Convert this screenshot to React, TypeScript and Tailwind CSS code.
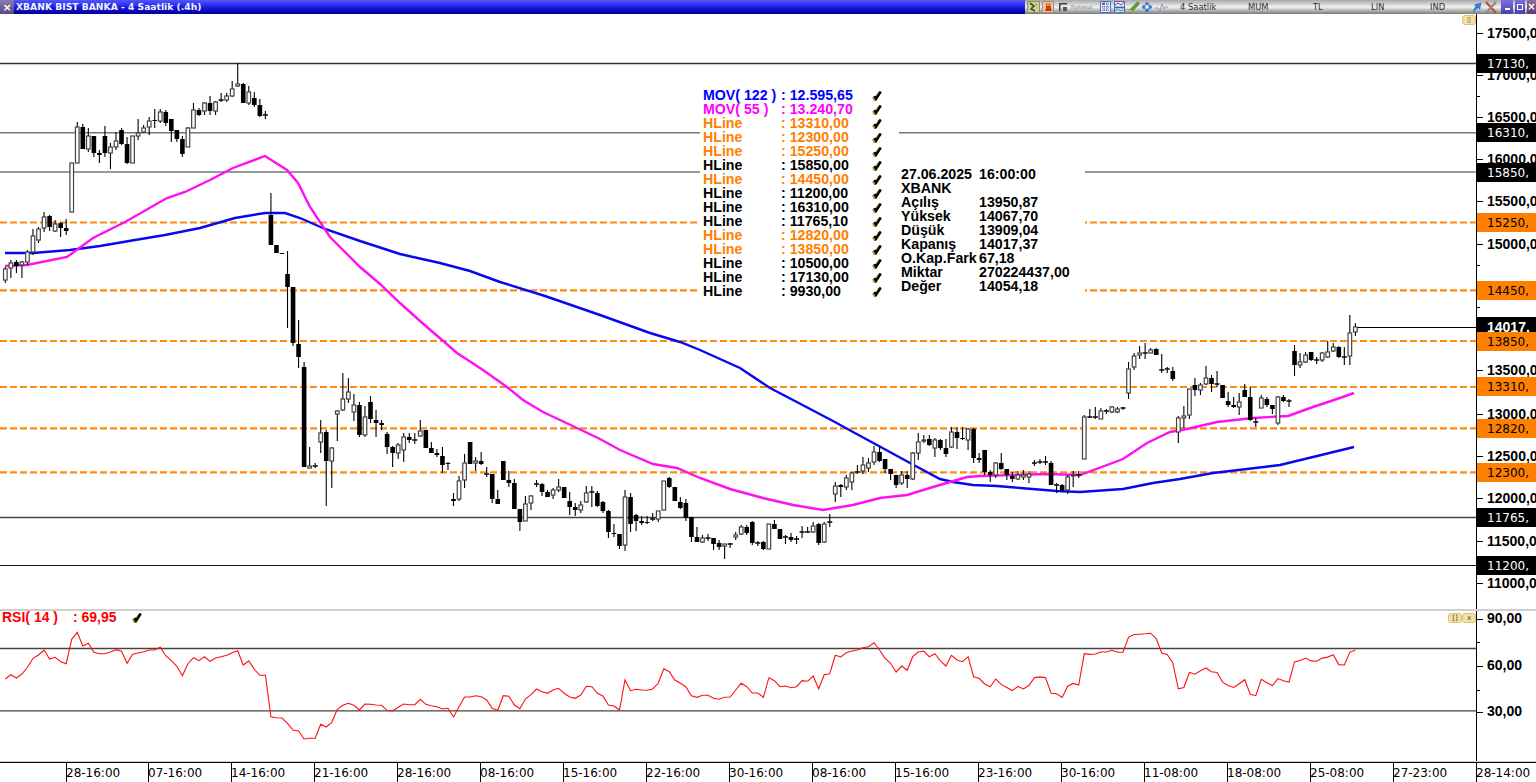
const candles: number[][] = [
  // wickTop, bodyTop, bodyBottom, wickBottom, black
  [267,269,280,283,0],[260,263,268,278,0],[260,262,266,273,1],[261,262,265,278,0],[250,252,262,265,0],[229,236,252,255,0],
  [227,229,240,243,0],[212,217,228,232,0],[215,216,227,231,1],[220,224,231,232,0],[222,223,228,237,1],[219,228,231,235,1],
  [163,163,212,212,0],[122,127,163,163,0],[124,127,149,149,1],[128,136,149,152,0],[136,136,153,157,1],[150,153,155,163,1],
  [126,136,153,157,1],[143,147,153,169,0],[132,141,147,150,0],[128,130,144,145,1],[137,144,163,164,1],[136,136,163,163,0],
  [119,133,136,140,0],[125,128,132,133,0],[117,121,127,135,0],[109,120,121,128,1],[109,112,121,123,0],[110,112,123,126,1],
  [119,119,131,142,1],[130,130,139,142,1],[136,139,154,157,1],[127,128,147,147,0],[103,110,128,128,0],[108,110,115,116,1],
  [102,103,111,115,0],[96,103,111,115,1],[101,102,111,115,0],[93,100,100,102,1],[93,96,100,102,0],[81,89,96,97,0],
  [63,84,86,87,0],[83,84,103,103,1],[86,92,103,105,0],[92,98,105,107,1],[99,105,116,117,1],[111,115,115,119,1],
  [193,215,245,245,1],[245,245,253,253,1],[253,253,254,254,1],[251,274,287,328,1],[287,287,343,346,1],[320,344,357,368,1],
  [362,367,467,467,1],[447,466,468,468,0],[463,466,466,468,1],[420,433,442,453,0],[430,432,461,506,1],[447,448,461,488,0],
  [410,411,414,441,0],[373,399,410,411,0],[378,392,399,403,0],[394,405,412,421,0],[402,405,435,437,1],[406,417,435,437,0],
  [396,402,419,423,1],[410,420,423,437,1],[420,423,425,430,1],[432,434,447,454,1],[446,447,453,467,1],[443,445,453,459,0],
  [433,437,450,462,0],[433,437,440,443,1],[433,440,440,444,1],[420,431,436,437,0],[430,430,448,448,1],[442,448,453,453,1],
  [449,453,455,457,1],[447,456,465,473,1],[462,463,464,470,1],[493,499,501,506,1],[476,481,499,501,0],[454,463,480,488,0],
  [442,442,464,464,1],[457,461,463,471,0],[452,461,464,465,1],[467,474,474,477,1],[474,474,499,503,1],[490,499,504,504,1],
  [461,461,480,480,1],[471,480,483,487,1],[479,483,509,509,1],[509,509,522,531,1],[496,504,521,521,0],[495,496,503,510,0],
  [480,484,484,487,1],[483,484,492,496,1],[490,492,497,497,1],[488,490,495,499,0],[479,487,490,492,0],[487,487,498,498,1],
  [492,501,507,515,1],[503,507,510,516,1],[501,505,510,513,0],[486,493,502,503,0],[486,492,492,507,1],[491,493,506,507,1],
  [501,502,511,513,1],[510,511,532,538,1],[524,533,534,537,1],[534,534,546,549,1],[490,497,545,551,0],[493,497,524,532,1],
  [514,515,521,531,1],[516,521,523,525,1],[516,522,523,524,1],[513,519,519,521,1],[511,511,519,522,0],[481,481,510,510,0],
  [477,478,487,488,1],[487,487,501,501,1],[497,502,508,509,1],[499,503,518,521,1],[517,517,537,542,1],[527,537,542,542,1],
  [535,538,542,543,0],[534,538,538,541,1],[538,538,544,550,1],[540,543,547,550,1],[544,544,546,559,0],[543,544,544,548,1],
  [532,535,537,540,0],[525,527,534,535,0],[525,527,533,535,1],[521,522,543,545,1],[541,543,543,546,1],[541,542,549,550,1],
  [524,524,549,549,0],[520,524,529,529,1],[529,529,539,539,1],[535,537,537,544,1],[533,537,540,542,1],[536,539,539,544,1],
  [526,532,532,538,1],[527,532,532,533,1],[522,526,532,533,0],[523,524,543,545,1],[522,524,542,543,0],[514,522,522,527,1],
  [482,486,494,502,0],[484,485,487,497,1],[475,478,487,490,0],[472,473,482,490,0],[465,472,472,474,1],[457,465,471,474,0],
  [458,463,468,472,0],[446,452,462,465,0],[447,452,461,462,1],[459,459,469,473,1],[469,469,474,480,1],[475,475,485,488,1],
  [471,475,483,485,0],[471,475,479,488,1],[452,453,479,480,0],[433,442,453,460,0],[435,440,441,443,0],[435,439,445,446,1],
  [438,440,448,457,0],[439,440,448,450,1],[439,448,454,457,1],[427,432,447,448,0],[427,432,438,449,1],[427,438,439,440,1],
  [428,429,440,450,0],[428,429,458,463,1],[453,458,460,463,1],[450,450,472,475,1],[470,472,475,482,1],[462,463,475,478,0],
  [453,463,469,470,1],[469,469,475,480,1],[472,476,479,482,1],[471,475,479,480,0],[470,475,477,480,0],[471,474,477,483,0],
  [460,463,463,466,1],[459,462,462,464,1],[456,462,462,465,1],[461,463,485,485,1],[483,485,485,493,1],[484,485,490,492,1],
  [475,477,490,494,0],[471,475,476,487,0],[471,475,475,478,1],[415,417,459,459,0],[409,417,417,418,1],[407,417,417,419,1],
  [408,411,419,419,0],[409,411,411,414,1],[406,407,412,413,0],[407,409,412,413,0],[407,408,408,410,1],[362,369,393,399,0],
  [353,356,367,370,0],[346,353,355,359,0],[343,353,353,359,1],[348,350,353,353,0],[348,349,355,355,1],[354,370,370,373,1],
  [367,369,369,373,1],[367,371,379,381,1],[416,418,432,443,0],[406,416,418,428,0],[389,389,415,419,0],[378,385,390,396,1],
  [383,385,390,395,0],[366,378,384,385,0],[375,378,384,392,1],[371,384,384,387,1],[385,385,398,398,1],[392,401,405,407,1],
  [397,405,407,408,1],[393,402,407,415,0],[384,390,397,397,1],[387,397,420,421,1],[418,422,422,427,1],[395,398,408,408,0],
  [397,399,405,407,1],[405,405,409,414,1],[396,397,423,425,0],[395,397,401,402,1],[399,401,401,407,1],[345,351,365,376,1],
  [353,362,365,368,0],[352,355,362,363,0],[352,352,360,361,1],[357,360,360,364,1],[352,353,360,362,0],[341,352,357,358,0],
  [343,347,351,352,0],[346,347,357,358,1],[347,357,357,365,1],[315,333,356,365,0],[323,327,332,336,0],
];

const blue = "5,253 33,253 70,250 100,246 135,240 165,235 200,228 235,218 265,213 285,213 300,218 325,229 360,241 400,254 440,263 470,271 500,282 545,296 600,315 650,333 680,342 700,350 740,368 770,388 793,400 833,421 853,432 877,445 910,463 940,479 953,482 973,485 997,486 1020,488 1057,491 1080,492 1123,489 1153,483 1180,479 1213,473 1247,469 1280,465 1313,457 1354,447";
const magenta = "5,266 27,265 67,257 93,238 125,222 167,198 185,192 210,180 233,168 265,156 287,170 298,183 310,207 330,237 360,267 380,284 400,303 420,321 442,340 457,353 483,370 507,387 523,400 543,412 577,428 600,439 620,450 653,464 677,468 700,478 730,489 763,498 793,505 823,510 853,505 880,498 907,495 933,487 967,477 980,476 1047,474 1080,475 1123,459 1147,443 1170,432 1187,429 1217,422 1253,418 1288,416 1313,407 1337,399 1354,393";

// rsi values read off at 3x for the first part, then at the slightly smaller crop scale
const rsiA = [237,224,234,222,202,175,165,150,177,172,185,191,118,97,138,130,157,161,161,156,149,154,190,163,159,155,150,150,142,167,182,199,227,191,173,182,170,184,174,170,166,158,152,195,182,208,226,226,350,353,354,370,390,393,417,415,415,373,381,367,328,316,310,316,330,312,313,315,316,331,333,322,312,314,314,298,313,317,320,327,325,351,320,291,291,287,290,300,325,331,287,289,315,326,297,284,267,275,280,270,265,280,291,295,285,259,260,280,288,315,318,330,240,272,268,270,271,267,250,206,215,240,250,261,287,292,286,286,295,298,292,291,270,250,260,279,279,292,233,242,260,258,263,260,242,244,228,266,224,221,166,171,158,153,150,143,140,128,150,175,190,216,198,211,170,156,153,170,161,183,198,166,180,185,170,230,235,252,260,237];
const rsiB = [247,256,265,253,260,250,227,225,227,273,274,285,252,244,249,157,159,158,152,152,147,153,153,109,101,100,99,97,113,155,160,183,260,256,212,217,207,199,210,212,240,250,256,245,233,276,280,232,242,250,230,236,240,181,177,170,178,179,170,167,160,189,190,153,146];
const rsi = [...rsiA.map((v) => 600 + v / 3), ...rsiB.map((v) => 600 + v / 2.925)]
  .map((y, i) => `${(5.33 + 5.533 * i).toFixed(1)},${y.toFixed(1)}`)
  .join(" ");

const legend = [
  { name: "MOV( 122 )", value: ": 12.595,65", color: "text-[#0000ff]" },
  { name: "MOV( 55 )", value: ": 13.240,70", color: "text-[#ff00ff]" },
  { name: "HLine", value: ": 13310,00", color: "text-[#ff8000]" },
  { name: "HLine", value: ": 12300,00", color: "text-[#ff8000]" },
  { name: "HLine", value: ": 15250,00", color: "text-[#ff8000]" },
  { name: "HLine", value: ": 15850,00", color: "text-black" },
  { name: "HLine", value: ": 14450,00", color: "text-[#ff8000]" },
  { name: "HLine", value: ": 11200,00", color: "text-black" },
  { name: "HLine", value: ": 16310,00", color: "text-black" },
  { name: "HLine", value: ": 11765,10", color: "text-black" },
  { name: "HLine", value: ": 12820,00", color: "text-[#ff8000]" },
  { name: "HLine", value: ": 13850,00", color: "text-[#ff8000]" },
  { name: "HLine", value: ": 10500,00", color: "text-black" },
  { name: "HLine", value: ": 17130,00", color: "text-black" },
  { name: "HLine", value: ": 9930,00", color: "text-black" },
];

const quote = [
  ["27.06.2025", "16:00:00"],
  ["XBANK", ""],
  ["Açılış", "13950,87"],
  ["Yüksek", "14067,70"],
  ["Düşük", "13909,04"],
  ["Kapanış", "14017,37"],
  ["O.Kap.Fark", "67,18"],
  ["Miktar", "270224437,00"],
  ["Değer", "14054,18"],
];

const priceTicks = [
  { y: 33, label: "17500,0" }, { y: 75, label: "17000,0" }, { y: 117, label: "16500,0" }, { y: 159, label: "16000,0" },
  { y: 201, label: "15500,0" }, { y: 244, label: "15000,0" }, { y: 286, label: "14500,0" }, { y: 328, label: "14000,0" },
  { y: 370, label: "13500,0" }, { y: 414, label: "13000,0" }, { y: 456, label: "12500,0" }, { y: 498, label: "12000,0" },
  { y: 541, label: "11500,0" }, { y: 583, label: "11000,0" },
];
const priceTags = [
  { y: 63, label: "17130,", orange: false }, { y: 132, label: "16310,", orange: false }, { y: 172, label: "15850,", orange: false },
  { y: 222, label: "15250,", orange: true }, { y: 290, label: "14450,", orange: true }, { y: 341, label: "13850,", orange: true },
  { y: 386, label: "13310,", orange: true }, { y: 428, label: "12820,", orange: true }, { y: 472, label: "12300,", orange: true },
  { y: 517, label: "11765,", orange: false }, { y: 565, label: "11200,", orange: false },
];
const times = ["28-16:00","07-16:00","14-16:00","21-16:00","28-16:00","08-16:00","15-16:00","22-16:00","30-16:00","08-16:00","15-16:00","23-16:00","30-16:00","11-08:00","18-08:00","25-08:00","27-23:00"];

function Check({ className = "" }: { className?: string }) {
  return (
    <svg width="10" height="11" viewBox="0 0 10 11" className={className}>
      <path d="M2 6.5 L3.8 9.5 L8.5 2" fill="none" stroke="#b89a30" strokeWidth="3" transform="translate(-0.8 0.4)" />
      <path d="M2.5 6 L4 8.8 L8.8 1.5" fill="none" stroke="#000" strokeWidth="2.4" />
    </svg>
  );
}

function PaneButton({ children }: { children: React.ReactNode }) {
  return (
    <div className="flex h-[10px] w-[14px] items-center justify-center rounded-[3px] border border-[#dcc27a] bg-[#f5e0a0] font-['DejaVu_Sans',sans-serif] text-[7px] leading-none text-[#444]">
      {children}
    </div>
  );
}

function ToolIcons() {
  return (
    <div className="flex items-center">
      <svg width="13" height="12" viewBox="0 0 13 12" className="ml-[2px]">
        <rect x="0.5" y="0.5" width="12" height="11" fill="#c8d0a0" stroke="#889070" />
        <path d="M3 2 L7 5 L4 8 L8 10" fill="none" stroke="#3a5a20" strokeWidth="1.6" />
        <circle cx="9" cy="3.5" r="1.5" fill="#d8b020" />
      </svg>
      <svg width="12" height="12" viewBox="0 0 12 12" className="ml-[2px]">
        <rect x="0.5" y="0.5" width="11" height="11" fill="#e8c8a0" stroke="#a09080" />
        <path d="M4 2 L8 2 L9 7 L10 10 L3 10 L4 7 Z" fill="#d83020" />
        <circle cx="6" cy="3.5" r="1.5" fill="#e8c020" />
      </svg>
      <svg width="9" height="9" viewBox="0 0 9 9" className="ml-[5px]">
        <path d="M0.8 8 V0.8 H8.2" fill="none" stroke="#444" strokeWidth="1.6" />
        <rect x="4" y="4" width="4" height="4" fill="#555" />
      </svg>
      <span className="ml-[3px] w-[24px] overflow-hidden whitespace-nowrap font-['DejaVu_Sans',sans-serif] text-[5px] leading-none text-[#777]">Fortrend</span>
      <svg width="11" height="12" viewBox="0 0 11 12" className="ml-[5px]">
        <rect x="0.5" y="0.5" width="10" height="11" fill="#e8f0ff" stroke="#5070c0" />
        <path d="M2 3 H9 M2 6 H9 M2 9 H9 M4 1 V11 M7 1 V11" stroke="#3050b0" strokeDasharray="1 1" />
        <rect x="2" y="2" width="3" height="2" fill="#d04020" />
      </svg>
      <svg width="11" height="12" viewBox="0 0 11 12" className="ml-[3px]">
        <rect x="0.5" y="0.5" width="10" height="11" fill="#dfe8ff" stroke="#5070c0" />
        <path d="M1 4 L4 2 L7 4 L10 1.5" fill="none" stroke="#d03030" />
        <path d="M0 6.5 H11" stroke="#3060c0" strokeWidth="1.6" />
        <path d="M1 9.5 L4 8.5 L7 10 L10 8.5" fill="none" stroke="#30a040" />
      </svg>
      <svg width="13" height="13" viewBox="0 0 13 13" className="ml-[2px]">
        <path d="M2 11.5 L3 8.5 L10 1.5 L12 3.5 L5 10.5 Z" fill="#50a830" stroke="#2a6a18" strokeWidth="0.6" />
        <path d="M10 1.5 L12 3.5 L12.5 2 L11 0.8 Z" fill="#d04030" />
        <path d="M2 11.5 L3 8.5 L5 10.5 Z" fill="#e8d8a0" />
      </svg>
      <svg width="12" height="12" viewBox="0 0 12 12" className="ml-[1px]">
        <path d="M6 0.5 L8.5 3 H3.5 Z M6 11.5 L8.5 9 H3.5 Z M0.5 6 L3 3.5 V8.5 Z M11.5 6 L9 3.5 V8.5 Z" fill="#3878d8" />
        <circle cx="6" cy="6" r="2.5" fill="none" stroke="#3878d8" strokeWidth="1.2" />
      </svg>
      <svg width="13" height="11" viewBox="0 0 13 11" className="ml-[2px]">
        <path d="M0 6 H3 L5 9 L7 2 L9 7 L10 5 H13" fill="none" stroke="#8aa0b8" />
      </svg>
    </div>
  );
}

function TitleBar() {
  return (
    <div className="flex h-[14px] shrink-0 font-['DejaVu_Sans',sans-serif]">
      <div className="flex w-[1025px] items-center bg-gradient-to-b from-[#5454ff] via-[#1c1ce8] to-[#000090]">
        <div className="flex h-[14px] w-[14px] items-center justify-center bg-gradient-to-b from-[#8a78b0] to-[#5a4a80] text-[11px] font-bold leading-none text-white">×</div>
        <span className="ml-[2px] whitespace-nowrap text-[9.2px] font-bold leading-none text-[#f4f4ff]">XBANK BIST BANKA - 4 Saatlik (.4h)</span>
      </div>
      <div className="flex flex-1 items-center bg-gradient-to-b from-[#a8a8a8] via-[#f2f2f2] to-[#7c7c7c] text-[8.4px] leading-none text-[#333]">
        <ToolIcons />
        <span className="ml-[12px] w-[68px] whitespace-nowrap">4 Saatlik</span>
        <span className="w-[65px]">MUM</span>
        <span className="w-[58px]">TL</span>
        <span className="w-[59px]">LIN</span>
        <span className="w-[42px]">IND</span>
        <svg width="10" height="10" viewBox="0 0 10 10">
          <path d="M0.5 9.5 L3.5 4 L2 2.5 L9.5 0.5 L8 8 L6 6 L2 9.5 Z" fill="#3a7ad8" />
        </svg>
        <svg width="14" height="13" viewBox="0 0 14 13" className="ml-[2px]">
          <path d="M2 1 L12 12" stroke="#d04030" strokeWidth="2" />
          <path d="M12 1 L2 12" stroke="#8a8a8a" strokeWidth="2" />
        </svg>
        <div className="ml-[3px] flex h-[14px] w-[12px] items-center justify-center bg-gradient-to-b from-[#7a70e0] to-[#4a40b0]">
          <span className="mt-[4px] h-[2px] w-[5px] bg-white" />
        </div>
        <div className="ml-[2px] flex h-[14px] w-[10px] items-center justify-center bg-gradient-to-b from-[#7a70e0] to-[#4a40b0]">
          <span className="h-[6px] w-[6px] border border-white" />
        </div>
        <div className="ml-[2px] flex h-[14px] flex-1 items-center justify-center bg-gradient-to-b from-[#907099] to-[#5c3a6a] text-[10px] font-bold text-white">×</div>
      </div>
    </div>
  );
}

function Candles() {
  return (
    <g>
      {candles.map(([wt, bt, bb, wb, black], i) => {
        const x = 5.33 + 5.533 * i;
        const flat = bb - bt < 1;
        return (
          <g key={i}>
            <line x1={x} x2={x} y1={wt} y2={wb} stroke="#000" strokeWidth={1.1} />
            {flat ? (
              <rect x={x - 2.5} y={bt - 0.8} width={5} height={1.6} fill="#111" />
            ) : black ? (
              <rect x={x - 2.3} y={bt} width={4.6} height={bb - bt} fill="#000" />
            ) : (
              <rect x={x - 1.8} y={bt} width={3.6} height={bb - bt} fill="#fff" stroke="#444" strokeWidth={1.2} />
            )}
          </g>
        );
      })}
    </g>
  );
}

function MainPane() {
  return (
    <div className="relative w-[1476px]">
      <svg width="1476" height="595" viewBox="0 14 1476 595" className="block">
        <line x1="0" x2="1476" y1="63.5" y2="63.5" stroke="#333" strokeWidth="1.4" />
        <line x1="0" x2="1476" y1="132.7" y2="132.7" stroke="#777" strokeWidth="1.6" />
        <line x1="0" x2="1476" y1="172" y2="172" stroke="#777" strokeWidth="1.6" />
        <line x1="0" x2="1476" y1="517.5" y2="517.5" stroke="#444" strokeWidth="1.4" />
        <line x1="0" x2="1476" y1="565.5" y2="565.5" stroke="#111" strokeWidth="1" />
        {[222.5, 290.3, 341, 387, 428.3, 472.3].map((y) => (
          <line key={y} x1="0" x2="1476" y1={y} y2={y} stroke="#ff8a10" strokeWidth="2.2" strokeDasharray="7 3" />
        ))}
        <line x1="1354" x2="1476" y1="327.5" y2="327.5" stroke="#000" strokeWidth="1" />
        <polyline points={blue} fill="none" stroke="#0808f0" strokeWidth="2.4" />
        <polyline points={magenta} fill="none" stroke="#ff10f0" strokeWidth="2.4" />
        <Candles />
      </svg>

      <div className="absolute left-[700px] top-[74px] h-[210px] w-[199px] bg-white pl-[3px] text-[14.2px] font-bold leading-[14px]">
        {legend.map((row, i) => (
          <div key={i} className={`flex h-[14px] ${row.color}`}>
            <span className="w-[78px] whitespace-nowrap">{row.name}</span>
            <span className="w-[90px] whitespace-nowrap">{row.value}</span>
            <Check className="ml-[1px] mt-[2px]" />
          </div>
        ))}
      </div>

      <div className="absolute left-[899px] top-[153px] h-[130px] w-[186px] bg-white pl-[2px] text-[14.2px] font-bold leading-[14px] text-black">
        {quote.map(([a, b], i) => (
          <div key={i} className="flex h-[14px] whitespace-nowrap">
            <span className="w-[78px]">{a}</span>
            <span>{b}</span>
          </div>
        ))}
      </div>

      <div className="absolute right-0 top-[1px]">
        <PaneButton>▯</PaneButton>
      </div>
    </div>
  );
}

function PriceAxis() {
  return (
    <div className="relative w-[60px] overflow-hidden border-l border-black">
      {priceTicks.map((t, i) => (
        <div key={t.y}>
          <span className="absolute left-0 h-px w-[6px] bg-black" style={{ top: t.y - 14 }} />
          {i < priceTicks.length - 1 && <span className="absolute left-0 h-px w-[3px] bg-black" style={{ top: t.y + 21 - 14 }} />}
          <span className="absolute left-[10px] whitespace-nowrap text-[14px] font-bold leading-[14px] text-black" style={{ top: t.y - 14 - 7 }}>
            {t.label}
          </span>
        </div>
      ))}
      <div className="absolute left-0 top-[303px] flex h-[16px] w-[60px] items-start bg-black pl-[10px] pt-[3px] text-[14px] font-bold leading-none text-white">14017,</div>
      {priceTags.map((t) => (
        <div
          key={t.y}
          className={`absolute left-0 flex h-[19px] w-[60px] items-center pl-[10px] font-['DejaVu_Sans',sans-serif] text-[12px] leading-none ${t.orange ? "bg-[#ff8000] text-black" : "bg-black text-white"}`}
          style={{ top: t.y - 14 - 9 }}
        >
          {t.label}
        </div>
      ))}
    </div>
  );
}

function RsiPane() {
  return (
    <div className="flex h-[150px] shrink-0">
      <div className="relative w-[1476px]">
        <svg width="1476" height="150" viewBox="0 611 1476 150" className="block">
          <line x1="0" x2="1476" y1="648.5" y2="648.5" stroke="#444" strokeWidth="1.3" />
          <line x1="0" x2="1476" y1="710.8" y2="710.8" stroke="#444" strokeWidth="1.3" />
          <polyline points={rsi} fill="none" stroke="#ff1010" strokeWidth="1.1" />
        </svg>
        <div className="absolute left-[2px] top-[-1px] flex text-[14px] font-bold leading-[14px] text-[#ff0000]">
          <span className="w-[71px] whitespace-nowrap">RSI( 14 )</span>
          <span className="w-[59px] whitespace-nowrap">: 69,95</span>
          <Check className="mt-[2px]" />
        </div>
        <div className="absolute right-0 top-[2px] flex">
          <PaneButton>[]</PaneButton>
          <PaneButton>x</PaneButton>
        </div>
      </div>
      <div className="relative w-[60px] border-l border-black text-[14px] font-bold leading-[14px] text-black">
        <span className="absolute left-0 top-[8px] h-px w-[6px] bg-black" />
        <span className="absolute left-0 top-[31px] h-px w-[3px] bg-black" />
        <span className="absolute left-0 top-[55px] h-px w-[6px] bg-black" />
        <span className="absolute left-0 top-[79px] h-px w-[3px] bg-black" />
        <span className="absolute left-0 top-[101px] h-px w-[6px] bg-black" />
        <span className="absolute left-[10px] top-[0px]">90,00</span>
        <span className="absolute left-[10px] top-[47px]">60,00</span>
        <span className="absolute left-[10px] top-[93px]">30,00</span>
      </div>
    </div>
  );
}

function TimeAxis() {
  return (
    <div className="flex h-[20px] shrink-0 overflow-hidden border-t border-black font-['DejaVu_Sans',sans-serif] text-[12px] indent-[-1px] leading-[20px] text-black">
      <div className="w-[66px]" />
      {times.map((t, i) => (
        <div key={i} className={`whitespace-nowrap border-l border-black ${i === 0 ? "w-[82px]" : "w-[83px]"}`}>
          {t}
        </div>
      ))}
      <div className="flex-1 whitespace-nowrap border-l border-black">28-14:00</div>
    </div>
  );
}

export default function App() {
  return (
    <div className="flex h-[782px] w-[1536px] flex-col overflow-hidden bg-white font-['Liberation_Sans',Arial,sans-serif]">
      <TitleBar />
      <div className="flex h-[595px] shrink-0">
        <MainPane />
        <PriceAxis />
      </div>
      <div className="h-[2px] shrink-0 bg-[#d0d0d0]" />
      <RsiPane />
      <div className="h-[1px] shrink-0 bg-[#d0d0d0]" />
      <TimeAxis />
    </div>
  );
}
